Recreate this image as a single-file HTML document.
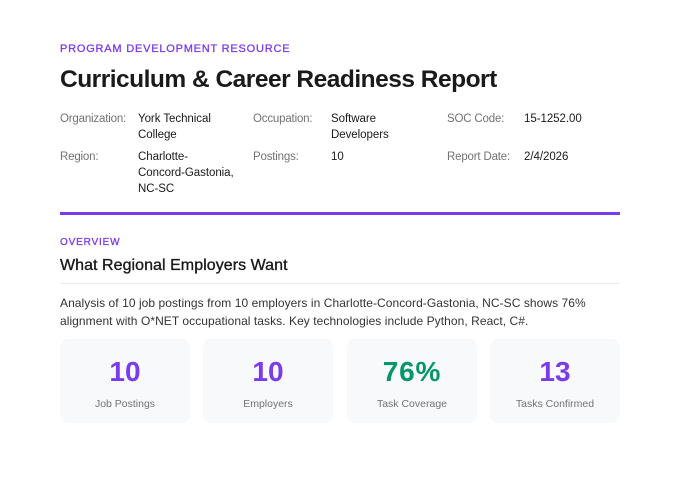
<!DOCTYPE html>
<html lang="en">
<head>
<meta charset="utf-8">
<title>Curriculum &amp; Career Readiness Report</title>
<style>
html,body{margin:0;padding:0;background:#fff;}
body{width:680px;height:480px;position:relative;overflow:hidden;font-family:"Liberation Sans",Arial,sans-serif;color:#1a1a1a;}
.t{position:absolute;white-space:nowrap;}
.l{font-size:11.5px;line-height:16px;color:#737373;letter-spacing:-.18px;}
.v{font-size:11.5px;line-height:16px;color:#1a1a1a;letter-spacing:-.05px;}
.card{position:absolute;top:339px;width:130px;height:84px;background:#f8f9fb;border-radius:8px;}
.n{position:absolute;left:0;right:0;top:17px;text-align:center;font-size:28px;line-height:32px;font-weight:700;color:#7c3aed;}
.c{position:absolute;left:0;right:0;top:58px;text-align:center;font-size:10.5px;line-height:14px;color:#737373;}
</style>
</head>
<body>
<div class="t" style="left:60px;top:41.5px;font-size:11px;line-height:14px;color:#7c3aed;letter-spacing:.79px;-webkit-text-stroke:.3px #7c3aed;">PROGRAM DEVELOPMENT RESOURCE</div>
<div class="t" style="left:60px;top:64px;font-size:24.5px;line-height:32px;font-weight:700;color:#1a1a1a;letter-spacing:-.5px;">Curriculum &amp; Career Readiness Report</div>

<div class="t l" style="left:60px;top:111px;">Organization:</div>
<div class="t v" style="left:138px;top:111px;">York Technical</div>
<div class="t v" style="left:138px;top:127px;">College</div>
<div class="t l" style="left:253px;top:111px;">Occupation:</div>
<div class="t v" style="left:331px;top:111px;">Software</div>
<div class="t v" style="left:331px;top:127px;">Developers</div>
<div class="t l" style="left:447px;top:111px;">SOC Code:</div>
<div class="t v" style="left:524px;top:111px;">15-1252.00</div>

<div class="t l" style="left:60px;top:149px;">Region:</div>
<div class="t v" style="left:138px;top:149px;">Charlotte-</div>
<div class="t v" style="left:138px;top:165px;">Concord-Gastonia,</div>
<div class="t v" style="left:138px;top:181px;">NC-SC</div>
<div class="t l" style="left:253px;top:149px;">Postings:</div>
<div class="t v" style="left:331px;top:149px;">10</div>
<div class="t l" style="left:447px;top:149px;">Report Date:</div>
<div class="t v" style="left:524px;top:149px;">2/4/2026</div>

<div style="position:absolute;left:60px;top:212px;width:560px;height:3px;background:#7c3aed;"></div>

<div class="t" style="left:60px;top:236px;font-size:10px;line-height:14px;color:#7c3aed;letter-spacing:.83px;-webkit-text-stroke:.3px #7c3aed;">OVERVIEW</div>
<div class="t" style="left:60px;top:256px;font-size:16px;line-height:20px;color:#1a1a1a;letter-spacing:.05px;-webkit-text-stroke:.35px #1a1a1a;">What Regional Employers Want</div>
<div style="position:absolute;left:60px;top:283px;width:560px;height:1px;background:#e8e9ec;"></div>

<div class="t" style="left:60px;top:294px;font-size:12px;line-height:18px;color:#333;letter-spacing:.06px;">Analysis of 10 job postings from 10 employers in Charlotte-Concord-Gastonia, NC-SC shows 76%</div>
<div class="t" style="left:60px;top:312px;font-size:12px;line-height:18px;color:#333;letter-spacing:.06px;">alignment with O*NET occupational tasks. Key technologies include Python, React, C#.</div>

<div class="card" style="left:60px;"><div class="n">10</div><div class="c">Job Postings</div></div>
<div class="card" style="left:203px;"><div class="n">10</div><div class="c">Employers</div></div>
<div class="card" style="left:347px;"><div class="n" style="color:#059669;letter-spacing:.8px;">76%</div><div class="c">Task Coverage</div></div>
<div class="card" style="left:490px;"><div class="n">13</div><div class="c">Tasks Confirmed</div></div>
</body>
</html>
